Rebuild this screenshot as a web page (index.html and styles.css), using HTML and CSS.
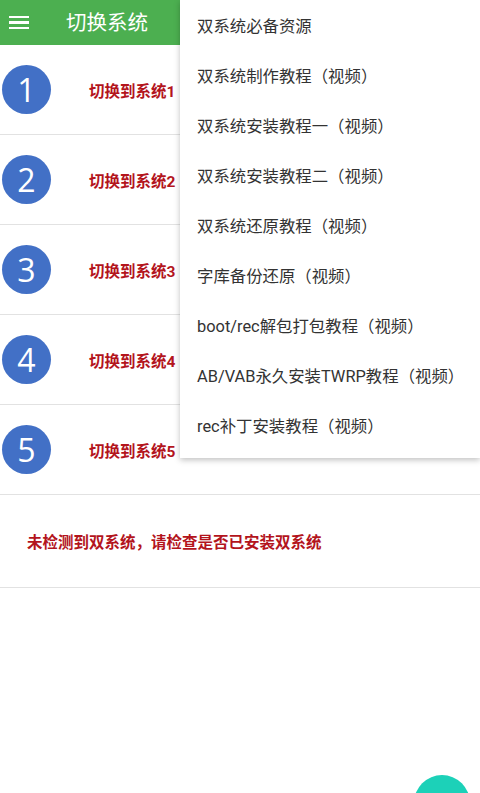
FILE: index.html
```html
<!DOCTYPE html>
<html lang="zh">
<head>
    <meta charset="UTF-8">
    <meta name="viewport" content="width=device-width, initial-scale=1.0">
    <title>切换系统</title>
    <link rel="stylesheet" href="styles.css">
</head>
<body>
    <div class="barra">
        <span class="hamburguesa"><i></i><i></i><i></i></span>
        <span class="titulo">切换系统</span>
    </div>

    <div class="fila">
        <div class="circulo">1</div>
        <div class="cambiar">切换到系统1</div>
    </div>
    <div class="fila">
        <div class="circulo">2</div>
        <div class="cambiar">切换到系统2</div>
    </div>
    <div class="fila">
        <div class="circulo">3</div>
        <div class="cambiar">切换到系统3</div>
    </div>
    <div class="fila">
        <div class="circulo">4</div>
        <div class="cambiar">切换到系统4</div>
    </div>
    <div class="fila">
        <div class="circulo">5</div>
        <div class="cambiar">切换到系统5</div>
    </div>
    <div class="aviso">未检测到双系统，请检查是否已安装双系统</div>

    <div class="menu">
        <div class="opcion">双系统必备资源</div>
        <div class="opcion">双系统制作教程（视频）</div>
        <div class="opcion">双系统安装教程一（视频）</div>
        <div class="opcion">双系统安装教程二（视频）</div>
        <div class="opcion">双系统还原教程（视频）</div>
        <div class="opcion">字库备份还原（视频）</div>
        <div class="opcion">boot/rec解包打包教程（视频）</div>
        <div class="opcion">AB/VAB永久安装TWRP教程（视频）</div>
        <div class="opcion">rec补丁安装教程（视频）</div>
    </div>

    <div class="flotante"></div>
</body>
</html>
```

FILE: styles.css
```css
html, body{
    margin: 0;
    height: 100%;
    overflow: hidden;
}
body{
    position: relative;
    background-color: white;
    font-family: Roboto, "Noto Sans CJK SC", sans-serif;
}
.barra{
    height: 45px;
    background-color: #4caf50;
    display: flex;
    align-items: center;
}
.hamburguesa{
    width: 20px;
    margin-left: 9px;
    display: flex;
    flex-direction: column;
    gap: 3px;
}
.hamburguesa i{
    display: block;
    height: 2.5px;
    background-color: white;
}
.titulo{
    margin-left: 37px;
    color: white;
    font-size: 20.5px;
    padding-bottom: 3px;
}
.fila{
    height: 90px;
    box-sizing: border-box;
    border-bottom: 1px solid #e2e2e2;
    display: flex;
    align-items: center;
}
.circulo{
    width: 49px;
    height: 49px;
    margin-left: 2px;
    border-radius: 50%;
    background-color: #4270c6;
    color: white;
    font-size: 32px;
    font-family: "Open Sans", sans-serif;
    display: flex;
    align-items: center;
    justify-content: center;
}
.cambiar{
    margin-left: 38px;
    color: #b3141c;
    font-size: 15.5px;
    font-weight: bold;
}
.aviso{
    height: 93px;
    box-sizing: border-box;
    border-bottom: 1px solid #e2e2e2;
    padding-left: 27px;
    display: flex;
    align-items: center;
    color: #b3141c;
    font-size: 15.5px;
    font-weight: bold;
}
.menu{
    position: absolute;
    top: 0;
    left: 180px;
    right: 0;
    background-color: white;
    box-shadow: 0 2px 6px rgba(0,0,0,0.25);
    padding-top: 2px;
    padding-bottom: 6px;
}
.opcion{
    height: 50px;
    line-height: 50px;
    padding-left: 17px;
    color: #333;
    font-size: 16.4px;
    white-space: nowrap;
}
.flotante{
    position: absolute;
    left: 414px;
    top: 775px;
    width: 56px;
    height: 56px;
    border-radius: 50%;
    background-color: #1cd1b8;
}
```
